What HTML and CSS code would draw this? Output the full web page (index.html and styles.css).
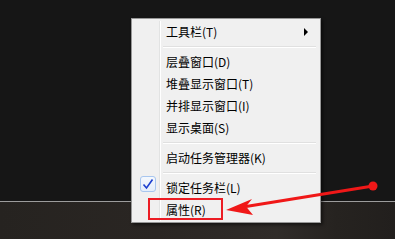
FILE: index.html
```html
<!DOCTYPE html>
<html lang="zh-CN">
<head>
<meta charset="utf-8">
<title>任务栏菜单</title>
<link rel="stylesheet" href="styles.css">
</head>
<body>
<div class="screen">
  <div class="desktop"></div>
  <div class="taskbar"></div>

  <div class="menu">
    <div class="gutter-line"></div>
    <div class="item"><span class="ico"></span><span class="label">工具栏(T)</span><span class="sub"></span></div>
    <div class="sep"></div>
    <div class="item"><span class="ico"></span><span class="label">层叠窗口(D)</span></div>
    <div class="item"><span class="ico"></span><span class="label">堆叠显示窗口(T)</span></div>
    <div class="item"><span class="ico"></span><span class="label">并排显示窗口(I)</span></div>
    <div class="item"><span class="ico"></span><span class="label">显示桌面(S)</span></div>
    <div class="sep"></div>
    <div class="item"><span class="ico"></span><span class="label">启动任务管理器(K)</span></div>
    <div class="sep"></div>
    <div class="item"><span class="ico"><span class="checkbox"><svg width="12" height="12" viewBox="0 0 12 12"><path d="M1.5 6.5 L4.5 10 L10.5 1.5" fill="none" stroke="#1c3fcf" stroke-width="1.6" stroke-linejoin="miter"/></svg></span></span><span class="label">锁定任务栏(L)</span></div>
    <div class="item"><span class="ico"></span><span class="label">属性(R)</span></div>
  </div>

  <svg class="annot" width="395" height="239" viewBox="0 0 395 239">
    <rect x="149" y="199" width="73" height="20" fill="none" stroke="#ec1c24" stroke-width="2"/>
    <line x1="373" y1="186" x2="246" y2="206.5" stroke="#f01818" stroke-width="3"/>
    <polygon points="226,210 252,199 246,206.5 253,215" fill="#f01818"/>
    <circle cx="373" cy="186" r="4.5" fill="#f01818"/>
  </svg>
</div>
</body>
</html>
```

FILE: styles.css
```css
html, body {
  margin: 0;
  padding: 0;
}
body {
  width: 395px;
  height: 239px;
  overflow: hidden;
  background: #151515;
  font-family: "Noto Sans CJK SC", "Noto Sans", sans-serif;
}
.screen {
  position: relative;
  width: 395px;
  height: 239px;
  display: flex;
  flex-direction: column;
}
.desktop {
  height: 201px;
  background: #161616;
}
.taskbar {
  flex: 1;
  border-top: 1px solid #9c9c9c;
  background: linear-gradient(90deg, #262320 0%, #2a2623 40%, #302c29 70%, #262320 85%, #221f1d 100%);
}
.menu {
  position: absolute;
  left: 131px;
  top: 18px;
  width: 188px;
  padding: 2px 0 1px 0;
  background: #f0f0f0;
  border: 1px solid #979797;
  box-shadow: 2px 2px 3px rgba(0,0,0,0.5);
}
.gutter-line {
  position: absolute;
  left: 27px;
  top: 2px;
  bottom: 1px;
  width: 1px;
  background: #e2e3e3;
  border-right: 1px solid #ffffff;
}
.item {
  position: relative;
  height: 22px;
  display: flex;
  align-items: center;
  margin: 0 2px;
  font-size: 12px;
  color: #000;
}
.ico {
  width: 32px;
  height: 22px;
  flex: none;
  position: relative;
}
.checkbox {
  position: absolute;
  left: 6px;
  top: -1px;
  width: 14px;
  height: 14px;
  border: 1px solid #a8c6ef;
  border-radius: 3px;
  background: linear-gradient(#f4f8fd, #e4eefb);
  display: flex;
  align-items: center;
  justify-content: center;
}
.label {
  flex: 1;
  line-height: 22px;
  white-space: nowrap;
}
.sub {
  width: 0;
  height: 0;
  border-top: 4px solid transparent;
  border-bottom: 4px solid transparent;
  border-left: 4px solid #000;
  margin-right: 10px;
}
.sep {
  height: 8px;
  position: relative;
}
.sep::before {
  content: "";
  position: absolute;
  left: 31px;
  right: 4px;
  top: 3px;
  height: 1px;
  background: #e0e0e0;
  border-bottom: 1px solid #ffffff;
}
.annot {
  position: absolute;
  left: 0;
  top: 0;
}
```
